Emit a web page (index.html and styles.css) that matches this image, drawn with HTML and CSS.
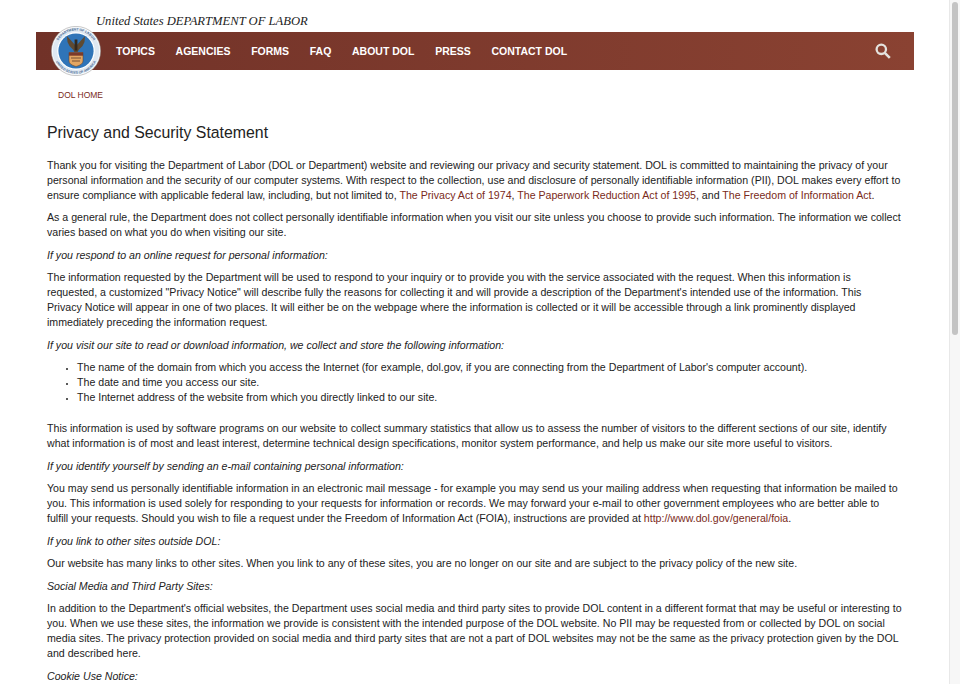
FILE: index.html
```html
<!DOCTYPE html>
<html lang="en">

    <head>
        <meta charset="UTF-8">
        <meta name="viewport" content="width=device-width, initial-scale=1.0">
        <title>Privacy and Security Statement</title>
        <link rel="stylesheet" href="styles.css">
    </head>

    <body>

        <div class="page">
            <div class="site">
                <header class="masthead">
                    <div class="agency">United States DEPARTMENT OF LABOR</div>
                    <nav class="navbar">
                        <svg class="seal" viewBox="0 0 50 50" aria-hidden="true">
                            <defs>
                                <path id="seal-top" d="M4.500 25 A20.500 20.500 0 0 1 45.500 25"/>
                                <path id="seal-bottom" d="M2.200 25 A22.800 22.800 0 0 0 47.800 25"/>
                            </defs>
                            <circle cx="25" cy="25" r="24.600" fill="#fff" stroke="#8f8f8f" stroke-width="0.500"/>
                            <circle cx="25" cy="25" r="23.400" fill="#dfe8f2"/>
                            <circle cx="25" cy="25" r="18.800" fill="#fff"/>
                            <text class="seal-text"><textPath href="#seal-top" startOffset="50%" text-anchor="middle">DEPARTMENT OF LABOR</textPath></text>
                            <text class="seal-text"><textPath href="#seal-bottom" startOffset="50%" text-anchor="middle">UNITED STATES OF AMERICA</textPath></text>
                            <circle cx="25" cy="25" r="17.600" fill="#2f74b8"/>
                            <path d="M25 20 L16 10 L16.500 16 L18.500 20 L22 23.500 L23.500 26 L26.500 26 L28 23.500 L31.500 20 L33.500 16 L34 10 Z" fill="#5f4a32"/>
                            <path d="M23.600 13.500 h2.800 v11 h-2.800 z" fill="#33291e"/>
                            <path d="M18 26.500 h14 v8.500 q0 3.500 -7 5.500 q-7 -2 -7 -5.500 z" fill="#e3a663" stroke="#5b3a26" stroke-width="0.500"/>
                            <path d="M18 26.500 h14 v3.200 h-14 z" fill="#7b3a2a"/>
                            <path d="M20 32 h10 M21 35 h8" stroke="#6b4630" stroke-width="0.900"/>
                        </svg>
                        <ul class="menu">
                            <li><a href="#">TOPICS</a></li>
                            <li><a href="#">AGENCIES</a></li>
                            <li><a href="#">FORMS</a></li>
                            <li><a href="#">FAQ</a></li>
                            <li><a href="#">ABOUT DOL</a></li>
                            <li><a href="#">PRESS</a></li>
                            <li><a href="#">CONTACT DOL</a></li>
                        </ul>
                        <svg class="search" viewBox="0 0 16 16" aria-hidden="true">
                            <circle cx="6.300" cy="6.300" r="4.700" fill="none" stroke="#e4e2de" stroke-width="2.300"/>
                            <path d="M9.800 9.800 L14.800 14.800" stroke="#e4e2de" stroke-width="2.600"/>
                        </svg>
                    </nav>
                </header>

                <div class="crumb"><a href="#">DOL HOME</a></div>

                <main class="content">
                    <h1>Privacy and Security Statement</h1>
                    <p>Thank you for visiting the Department of Labor (DOL or Department) website and reviewing our privacy and security statement. DOL is committed to maintaining the privacy of your personal information and the security of our computer systems. With respect to the collection, use and disclosure of personally identifiable information (PII), DOL makes every effort to ensure compliance with applicable federal law, including, but not limited to, <a href="#">The Privacy Act of 1974</a>, <a href="#">The Paperwork Reduction Act of 1995</a>, and <a href="#">The Freedom of Information Act</a>.</p>
                    <p>As a general rule, the Department does not collect personally identifiable information when you visit our site unless you choose to provide such information. The information we collect varies based on what you do when visiting our site.</p>
                    <p><em>If you respond to an online request for personal information:</em></p>
                    <p>The information requested by the Department will be used to respond to your inquiry or to provide you with the service associated with the request. When this information is requested, a customized "Privacy Notice" will describe fully the reasons for collecting it and will provide a description of the Department's intended use of the information. This<br>Privacy Notice will appear in one of two places. It will either be on the webpage where the information is collected or it will be accessible through a link prominently displayed immediately preceding the information request.</p>
                    <p><em>If you visit our site to read or download information, we collect and store the following information:</em></p>
                    <ul class="list">
                        <li>The name of the domain from which you access the Internet (for example, dol.gov, if you are connecting from the Department of Labor's computer account).</li>
                        <li>The date and time you access our site.</li>
                        <li>The Internet address of the website from which you directly linked to our site.</li>
                    </ul>
                    <p>This information is used by software programs on our website to collect summary statistics that allow us to assess the number of visitors to the different sections of our site, identify what information is of most and least interest, determine technical design specifications, monitor system performance, and help us make our site more useful to visitors.</p>
                    <p><em>If you identify yourself by sending an e-mail containing personal information:</em></p>
                    <p>You may send us personally identifiable information in an electronic mail message - for example you may send us your mailing address when requesting that information be mailed to you. This information is used solely for responding to your requests for information or records. We may forward your e-mail to other government employees who are better able to fulfill your requests. Should you wish to file a request under the Freedom of Information Act (FOIA), instructions are provided at <a href="#">http://www.dol.gov/general/foia</a>.</p>
                    <p><em>If you link to other sites outside DOL:</em></p>
                    <p>Our website has many links to other sites. When you link to any of these sites, you are no longer on our site and are subject to the privacy policy of the new site.</p>
                    <p><em>Social Media and Third Party Sites:</em></p>
                    <p>In addition to the Department's official websites, the Department uses social media and third party sites to provide DOL content in a different format that may be useful or interesting to you. When we use these sites, the information we provide is consistent with the intended purpose of the DOL website. No PII may be requested from or collected by DOL on social media sites. The privacy protection provided on social media and third party sites that are not a part of DOL websites may not be the same as the privacy protection given by the DOL and described here.</p>
                    <p><em>Cookie Use Notice:</em></p>
                </main>
            </div>

            <div class="scrollbar"><div class="thumb"></div></div>
        </div>

    </body>

</html>
```

FILE: styles.css
```css
html,
body {
    margin: 0;
    padding: 0;
    height: 100%;
    overflow: hidden;
}

body {
    font-family: "Liberation Sans", Arial, sans-serif;
    font-size: 10.62px;
    line-height: 15px;
    color: #222;
    background-color: #fff;
}

a {
    color: #7a2a20;
    text-decoration: none;
}

.page {
    display: flex;
    height: 684px;
    overflow: hidden;
}

.site {
    flex: 1;
    min-width: 0;
    padding-top: 13px;
}

.masthead {
    margin: 0 36px;
    width: 878px;
}

.agency {
    height: 19px;
    padding-left: 60px;
    font-family: "Liberation Serif", "Times New Roman", serif;
    font-style: italic;
    font-size: 12.62px;
    line-height: 16px;
    color: #222;
}

.navbar {
    display: flex;
    align-items: center;
    height: 38px;
    padding: 0 23px 0 15px;
    background: linear-gradient(to right, #713228, #8a4232);
}

.seal {
    width: 50px;
    height: 50px;
    flex: none;
    margin-top: -1px;
}

.seal-text {
    font-family: "Liberation Sans", Arial, sans-serif;
    font-size: 3.4px;
    font-weight: bold;
    fill: #4a6c94;
}

.menu {
    display: flex;
    gap: 20.7px;
    flex: 1;
    list-style: none;
    margin: 0 0 0 15px;
    padding: 0;
}

.menu a {
    color: #fff;
    font-weight: bold;
    font-size: 10.5px;
}

.search {
    width: 16px;
    height: 16px;
    flex: none;
}

.crumb {
    margin: 18px 0 0 58px;
    font-size: 8.5px;
    line-height: 14px;
}

.content {
    width: 856px;
    margin: 21px 0 0 47px;
}

h1 {
    margin: 0 0 14.75px;
    font-size: 15.85px;
    font-weight: normal;
    line-height: 20px;
    color: #222;
}

p {
    margin: 0 0 7.5px;
}

.list {
    margin: 0 0 16px;
    padding-left: 30px;
}

.list li::marker {
    font-size: 8px;
}

.scrollbar {
    flex: none;
    width: 11px;
    box-sizing: border-box;
    padding: 2px 2px 0 2px;
    background-color: #f7f7f7;
    border-left: 1px solid #e8e8e8;
}

.thumb {
    height: 333px;
    border-radius: 3px;
    background-color: #c4c4c4;
}
```
